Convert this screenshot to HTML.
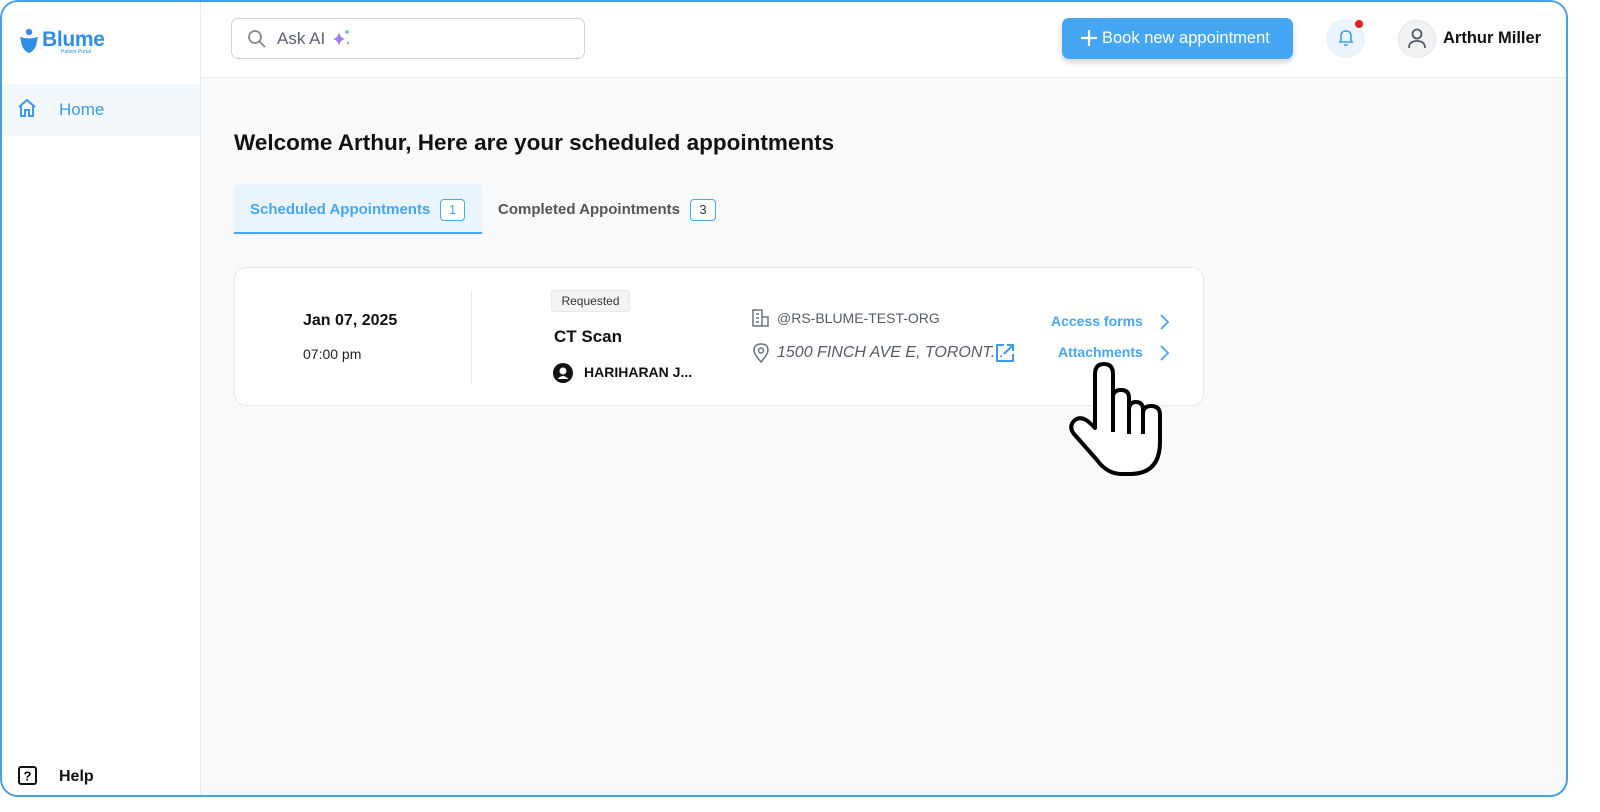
<!DOCTYPE html>
<html><head><meta charset="utf-8"><style>
*{box-sizing:border-box;margin:0;padding:0}
body{width:1600px;height:812px;background:#fff;font-family:"Liberation Sans",Arial,sans-serif;position:relative;overflow:hidden}
.frame{position:absolute;left:0;top:0;width:1568px;height:797px;border:2px solid #4a9ee6;border-radius:18px;overflow:hidden;background:#f8f9fb}
.side{position:absolute;left:0;top:0;width:199px;height:100%;background:#fff;border-right:1px solid #e8eaee}
.head{position:absolute;left:199px;top:0;right:0;height:76px;background:#fff;border-bottom:1px solid #e8eaee}
.abs{position:absolute}
.blue{color:#3d9be9}
</style></head><body>
<div class="frame">
 <div class="side">
  <svg class="abs" style="left:17px;top:26px" width="20" height="26" viewBox="0 0 20 26"><circle cx="10" cy="4" r="3.2" fill="#2f8fe8"/><path d="M1 9 Q10 12 19 9 L17 18 Q14 24 10 25 Q6 24 3 18Z" fill="#2f8fe8"/></svg>
  <div class="abs" style="left:40px;top:26px;font-size:21px;font-weight:bold;color:#2f8fe8;letter-spacing:-0.3px">Blume</div>
  <div class="abs" style="left:59px;top:47px;font-size:5px;color:#2f8fe8">Patient Portal</div>
  <div class="abs" style="left:0;top:82px;width:198px;height:52px;background:#f3f8fd"></div>
  <svg class="abs" style="left:15px;top:96px" width="20" height="20" viewBox="0 0 20 20" fill="none" stroke="#3d9be9" stroke-width="2"><path d="M2 9 L10 2 L18 9 M4 8 V18 H8 V12 H12 V18 H16 V8"/></svg>
  <div class="abs blue" style="left:57px;top:98px;font-size:17px">Home</div>
  <svg class="abs" style="left:16px;top:764px" width="19" height="19" viewBox="0 0 19 19"><rect x="1" y="1" width="17" height="17" rx="2" fill="none" stroke="#111" stroke-width="2"/><text x="9.5" y="14.5" font-size="13" font-weight="bold" text-anchor="middle" font-family="Liberation Sans">?</text></svg>
  <div class="abs" style="left:57px;top:766px;font-size:16px;font-weight:bold;color:#111">Help</div>
 </div>
 <div class="head">
  <div class="abs" style="left:30px;top:16px;width:354px;height:41px;border:1px solid #cfd3d9;border-radius:7px"></div>
  <svg class="abs" style="left:46px;top:27px" width="20" height="20" viewBox="0 0 20 20" fill="none" stroke="#888" stroke-width="1.8"><circle cx="8" cy="8" r="6"/><path d="M12.5 12.5 L18 18"/></svg>
  <div class="abs" style="left:76px;top:27px;font-size:17px;color:#5b6370">Ask AI</div>
  <svg class="abs" style="left:131px;top:26px" width="20" height="20" viewBox="0 0 20 20"><path d="M7 4 Q8 10 13 11 Q8 12 7 18 Q6 12 1 11 Q6 10 7 4Z" fill="#9b7cf0"/><path d="M15 1 Q15.5 3.5 18 4 Q15.5 4.5 15 7 Q14.5 4.5 12 4 Q14.5 3.5 15 1Z" fill="#6aa8f2"/><path d="M16 13 Q16.3 14.7 18 15 Q16.3 15.3 16 17 Q15.7 15.3 14 15 Q15.7 14.7 16 13Z" fill="#6aa8f2"/></svg>
  <div class="abs" style="left:861px;top:16px;width:231px;height:41px;background:#45a6f3;border-radius:7px;box-shadow:0 3px 6px rgba(0,0,0,.18);color:#fff;font-size:16.5px;line-height:41px;padding-left:40px">Book new appointment</div>
  <svg class="abs" style="left:879px;top:27px" width="18" height="18" viewBox="0 0 18 18" stroke="#fff" stroke-width="2.2"><path d="M9 1V17M1 9H17"/></svg>
  <div class="abs" style="left:1125px;top:17px;width:39px;height:39px;border-radius:50%;background:#ebf4fd"></div>
  <svg class="abs" style="left:1135px;top:26px" width="20" height="20" viewBox="0 0 20 20" fill="none" stroke="#3d9be9" stroke-width="1.6"><path d="M4 14 L5 12 V8 Q5 3 10 3 Q15 3 15 8 V12 L16 14Z M8 17 H12"/></svg>
  <div class="abs" style="left:1154px;top:18px;width:8px;height:8px;border-radius:50%;background:#e02020"></div>
  <div class="abs" style="left:1197px;top:18px;width:38px;height:38px;border-radius:50%;background:#f1f2f4;border:1px solid #e3e5e8"></div>
  <svg class="abs" style="left:1205px;top:25px" width="22" height="22" viewBox="0 0 22 22" fill="none" stroke="#555b66" stroke-width="1.8"><circle cx="11" cy="7" r="4.5"/><path d="M3 21 Q3 14 11 14 Q19 14 19 21"/></svg>
  <div class="abs" style="left:1242px;top:27px;font-size:16.5px;font-weight:bold;color:#111">Arthur Miller</div>
 </div>
 <div class="abs" style="left:232px;top:128px;font-size:22.5px;font-weight:bold;color:#111">Welcome Arthur, Here are your scheduled appointments</div>
 <div class="abs" style="left:232px;top:182px;width:248px;height:50px;background:#eaf4fd;border-radius:6px 6px 0 0;border-bottom:2px solid #45a6f3"></div>
 <div class="abs blue" style="left:248px;top:199px;font-size:15px;font-weight:bold;color:#45a6f3">Scheduled Appointments</div>
 <div class="abs" style="left:438px;top:197px;width:25px;height:22px;border:1.5px solid #45a6f3;border-radius:4px;background:#fff;font-size:13px;text-align:center;line-height:19px;color:#45a6f3">1</div>
 <div class="abs" style="left:496px;top:199px;font-size:15px;font-weight:bold;color:#555">Completed Appointments</div>
 <div class="abs" style="left:688px;top:197px;width:26px;height:22px;border:1.5px solid #45a6f3;border-radius:4px;background:#fff;font-size:13px;text-align:center;line-height:19px;color:#333">3</div>
 <div class="abs" style="left:232px;top:265px;width:970px;height:139px;background:#fff;border:1px solid #e6e8ec;border-radius:12px"></div>
 <div class="abs" style="left:301px;top:310px;font-size:16px;font-weight:bold;color:#111">Jan 07, 2025</div>
 <div class="abs" style="left:301px;top:344px;font-size:14px;color:#222">07:00 pm</div>
 <div class="abs" style="left:469px;top:288px;width:1px;height:93px;background:#e6e8ec"></div>
 <div class="abs" style="left:549px;top:288px;width:79px;height:22px;background:#f3f4f6;border:1px solid #e6e8ec;border-radius:3px;font-size:12px;text-align:center;line-height:20px;color:#333">Requested</div>
 <div class="abs" style="left:552px;top:325px;font-size:17px;font-weight:bold;color:#111">CT Scan</div>
 <svg class="abs" style="left:551px;top:361px" width="20" height="20" viewBox="0 0 20 20"><circle cx="10" cy="10" r="10" fill="#111"/><circle cx="10" cy="8" r="3.5" fill="#fff"/><path d="M4.5 16 Q10 10 15.5 16" fill="#fff"/></svg>
 <div class="abs" style="left:582px;top:362px;font-size:14px;font-weight:bold;color:#111">HARIHARAN J...</div>
 <svg class="abs" style="left:749px;top:306px" width="20" height="20" viewBox="0 0 20 20" fill="none" stroke="#6b7280" stroke-width="1.5"><rect x="2" y="2" width="9" height="16"/><path d="M11 9H17V18H11M5 6H8M5 10H8M5 14H8"/></svg>
 <div class="abs" style="left:775px;top:308px;font-size:14px;color:#555b66">@RS-BLUME-TEST-ORG</div>
 <svg class="abs" style="left:750px;top:341px" width="18" height="20" viewBox="0 0 18 20" fill="none" stroke="#6b7280" stroke-width="1.5"><path d="M9 19 Q2 11 2 7.5 Q2 1 9 1 Q16 1 16 7.5 Q16 11 9 19Z"/><circle cx="9" cy="7.5" r="2.5"/></svg>
 <div class="abs" style="left:775px;top:342px;font-size:16px;font-style:italic;color:#555b66">1500 FINCH AVE E, TORONT...</div>
 <svg class="abs" style="left:993px;top:341px" width="20" height="20" viewBox="0 0 20 20" fill="none" stroke="#3d9be9" stroke-width="2"><path d="M9 2H2V18H18V11M12 2H18V8M18 2L9 11"/></svg>
 <div class="abs" style="left:1049px;top:311px;font-size:14px;font-weight:bold;color:#45a6f3">Access forms</div>
 <div class="abs" style="left:1056px;top:342px;font-size:14px;font-weight:bold;color:#45a6f3">Attachments</div>
 <svg class="abs" style="left:1156px;top:311px" width="12" height="50" viewBox="0 0 12 50" fill="none" stroke="#45a6f3" stroke-width="1.8"><path d="M3 2L10 9L3 16M3 33L10 40L3 47"/></svg>
 <svg class="abs" style="left:0;top:0" width="1600" height="812" viewBox="0 0 1600 812"><path d="M1093,420 L1093,372 Q1093,362 1102,362 Q1111,362 1111,372 L1111,395 Q1111,388 1119,388 Q1127,388 1127,396 L1127,408 Q1127,400 1134,400 Q1141,400 1141,408 L1141,412 Q1141,404 1149,404 Q1158,404 1158,413 L1158,440 Q1158,472 1128,472 L1120,472 Q1105,472 1095,458 L1072,432 Q1066,424 1073,418 Q1080,413 1089,422 L1093,426 Z M1111,395 L1111,430 M1127,408 L1127,432 M1141,412 L1141,432" fill="#fff" stroke="#000" stroke-width="4" stroke-linejoin="round"/></svg>
</div>
</body></html>
